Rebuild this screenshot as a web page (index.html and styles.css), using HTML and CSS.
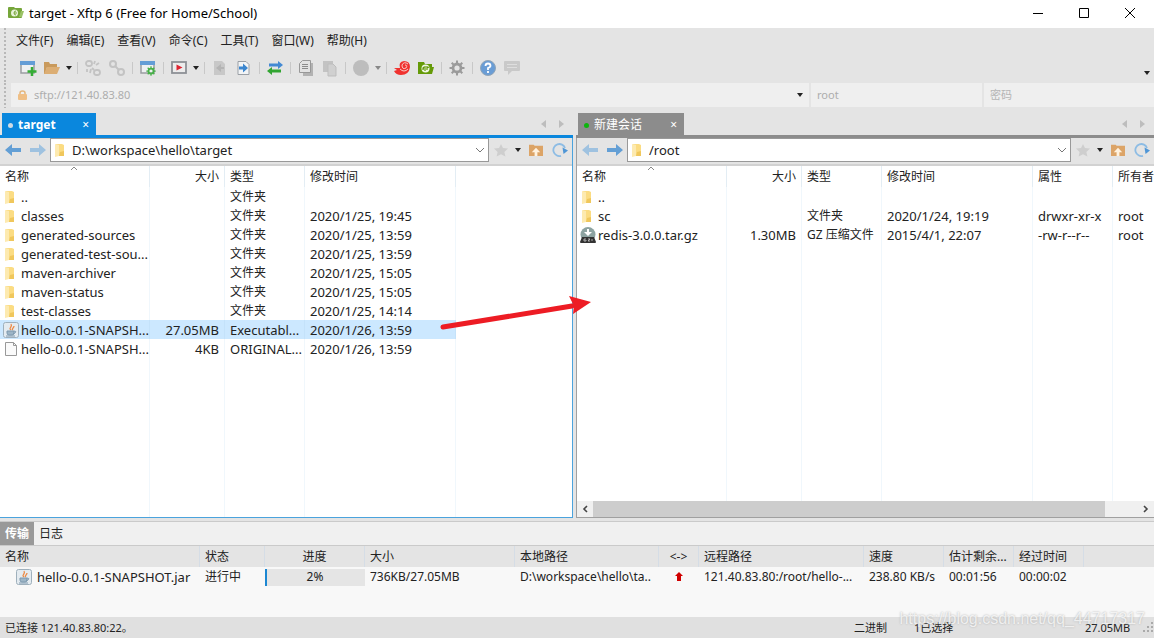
FILE: index.html
```html
<!DOCTYPE html>
<html lang="zh-CN">
<head>
<meta charset="utf-8">
<title>target - Xftp 6</title>
<link rel="stylesheet" href="styles.css">
</head>
<body>
<svg class="defs" aria-hidden="true">
  <symbol id="folder" viewBox="0 0 10 14"><path d="M1 1h6l2 1v11H1z" fill="#fbdc83"/><path d="M0 1l4 1v11l-4 1z" fill="#fdeab0"/><path d="M5 9l4-1v5H4z" fill="#f0c75c"/></symbol>
  <symbol id="jar" viewBox="0 0 16 16"><rect x=".5" y=".5" width="15" height="15" rx="2" fill="#e4ebf0" stroke="#9fb0bc"/><path d="M8 8c-3-2 2-3 0-6M10 8c-2-1 1-2 1-4" fill="none" stroke="#ec8a45" stroke-width="1.3"/><path d="M4 9h7v2q0 2-2 2H6q-2 0-2-2zM3 14h9" fill="#9db5c6" stroke="#7c98ae"/><path d="M11 9q3 0 1 2l-2 1" fill="none" stroke="#7c98ae"/></symbol>
  <symbol id="page" viewBox="0 0 16 16"><path d="M2.500 1.500h8l3 3v10h-11z" fill="#fafafa" stroke="#999"/><path d="M10.500 1.500v3h3" fill="none" stroke="#999"/></symbol>
  <symbol id="gz" viewBox="0 0 16 16"><circle cx="8" cy="7.500" r="7.500" fill="#8da3a1"/><path d="M7 2h2v3h3L8 9 4 5h3z" fill="#fff"/><path d="M2 10h12l2 5q0 1-1 1H1q-1 0-1-1z" fill="#333"/><path d="M6 12H4v2h2v-1M8 12h2l-2 2h2M12 12v2" fill="none" stroke="#ccc" stroke-width=".8"/></symbol>
  <symbol id="left" viewBox="0 0 16 14"><path d="M0 7l7-6v4h9v4H7v4z" fill="currentColor"/></symbol>
  <symbol id="right" viewBox="0 0 16 14"><path d="M16 7L9 1v4H0v4h9v4z" fill="currentColor"/></symbol>
  <symbol id="caret" viewBox="0 0 6 4"><path d="M0 0h6L3 4z" fill="currentColor"/></symbol>
  <symbol id="chev" viewBox="0 0 10 6"><path d="M1 1l4 4 4-4" fill="none" stroke="#777"/></symbol>
  <symbol id="star" viewBox="0 0 14 14"><path d="M7 1l2 4 5 .6-3.600 3.400 1 4.600L7 11.300 2.600 13.600l1-4.600L0 5.600 5 5z" fill="#cecece"/></symbol>
  <symbol id="up" viewBox="0 0 15 13"><path d="M0 1h5l1 1h9v11H0z" fill="#dca467"/><path d="M7.500 4l4.500 5H9v4H6V9H3z" fill="#fff2df"/></symbol>
  <symbol id="reload" viewBox="0 0 16 14"><path d="M9 12.800A6 6 0 1 1 13 5" fill="none" stroke="#8dbce4" stroke-width="1.800"/><path d="M10.500 4.500l5.500 3-4.500 3.500z" fill="#4f96d6"/></symbol>
  <symbol id="window" viewBox="0 0 16 16"><path d="M1 2h13v11H1z" fill="#eef0f2" stroke="#9a9da1" stroke-width="1.500"/><path d="M0 1h15v4H0z" fill="#649dd6"/></symbol>
  <symbol id="gear" viewBox="0 0 16 16"><circle cx="8" cy="8" r="4" fill="none" stroke="currentColor" stroke-width="2.800"/><path d="M8 .5v3M8 12.500v3M.5 8h3M12.500 8h3M2.700 2.700l2 2M11.300 11.300l2 2M2.700 13.300l2-2M11.300 4.700l2-2" stroke="currentColor" stroke-width="2"/></symbol>
  <symbol id="tri-l" viewBox="0 0 5 8"><path d="M5 0v8L0 4z" fill="#bdbdbd"/></symbol>
  <symbol id="tri-r" viewBox="0 0 5 8"><path d="M0 0v8l5-4z" fill="#bdbdbd"/></symbol>
  <symbol id="doc" viewBox="0 0 16 16"><path d="M2 1h8l3 3v11H2z" fill="currentColor"/></symbol>
</svg>

<header class="titlebar">
  <svg class="i16" viewBox="0 0 16 16"><path d="M0 3q0-1 1-1h5l1 1h6q1 0 1 1v8q0 1-1 1H1q-1 0-1-1z" fill="#76a63a"/><path d="M13 6h3l-2 6h-3z" fill="#9bc267"/><circle cx="6.500" cy="8" r="3.500" fill="#e8f2da"/><path d="M8 6a2 2 0 1 0 0 4M6 8h3" stroke="#76a63a" fill="none"/></svg>
  <span class="title">target - Xftp 6 (Free for Home/School)</span>
  <button class="win" aria-label="最小化"><svg class="i12" viewBox="0 0 12 12"><path d="M1 6.500h10" stroke="#000"/></svg></button>
  <button class="win" aria-label="最大化"><svg class="i12" viewBox="0 0 12 12"><path d="M1.500 1.500h9v9h-9z" fill="none" stroke="#000"/></svg></button>
  <button class="win" aria-label="关闭"><svg class="i12" viewBox="0 0 12 12"><path d="M1 1l10 10M11 1L1 11" stroke="#000"/></svg></button>
</header>

<div class="bars">
  <div class="grip">
    <nav class="menu"><button>文件(F)</button><button>编辑(E)</button><button>查看(V)</button><button>命令(C)</button><button>工具(T)</button><button>窗口(W)</button><button>帮助(H)</button></nav>
    <div class="tools">
      <button class="tool" aria-label="新建"><svg class="i16"><use href="#window"/><path d="M12 7v9M7.500 11.500h9" stroke="#35ad35" stroke-width="2.500"/></svg></button>
      <button class="tool" aria-label="打开"><svg class="i16" viewBox="0 0 16 16"><path d="M0 2h5l1 2h7v3H3l-2 7H0z" fill="#c99a5c"/><path d="M3 7h13l-3 7H0z" fill="#dcae74"/></svg></button>
      <button class="drop" aria-label="更多"><svg class="caret"><use href="#caret"/></svg></button><i class="sep"></i>
      <button class="tool" aria-label="断开"><svg class="i16" viewBox="0 0 16 16" fill="none" stroke="#c3c3c3" stroke-width="1.800"><rect x="1" y="1" width="6" height="5" rx="2.500"/><rect x="9" y="10" width="6" height="5" rx="2.500"/><path d="M10 1l-1 3M14 3l-3 2M2 9v3M6 9l-1 4M7 8l2 2"/></svg></button>
      <button class="tool" aria-label="重新连接"><svg class="i16" viewBox="0 0 16 16" fill="none" stroke="#c3c3c3" stroke-width="2"><rect x="1" y="1" width="6" height="6" rx="3"/><rect x="9" y="9" width="6" height="6" rx="3"/><path d="M6 6l4 4"/></svg></button><i class="sep"></i>
      <button class="tool" aria-label="属性"><svg class="i16"><use href="#window"/><use class="green" href="#gear" x="6" y="6" width="10" height="10"/></svg></button><i class="sep"></i>
      <button class="tool" aria-label="执行"><svg class="i16" viewBox="0 0 16 16"><rect x="1" y="2" width="14" height="11" fill="#ececec" stroke="#8d9196" stroke-width="1.800"/><path d="M5.500 4.500l6 3-6 3z" fill="#dd2430"/></svg></button>
      <button class="drop" aria-label="更多"><svg class="caret"><use href="#caret"/></svg></button><i class="sep"></i>
      <button class="tool pale" aria-label="下载"><svg class="i16"><use href="#doc"/><path d="M4 8l5-4v3h3v2H9v3z" fill="#b4b4b4"/></svg></button>
      <button class="tool" aria-label="上传"><svg class="i16" viewBox="0 0 16 16"><path d="M2 1.500h8l3 3v10H2z" fill="#f2f4f6" stroke="#9a9fa5"/><path d="M3 6.500h4v-3l5 4.500-5 4.500v-3H3z" fill="#3b86cf"/></svg></button><i class="sep"></i>
      <button class="tool" aria-label="同步"><svg class="i16" viewBox="0 0 16 16"><path d="M2 3.500h9V1l5 4-5 4V6.500H2z" fill="#4389d3"/><path d="M14 9.500H5V7l-5 4 5 4v-2.500h9z" fill="#32a532"/></svg></button><i class="sep"></i>
      <button class="tool" aria-label="复制"><svg class="i16" viewBox="0 0 16 16"><path d="M5 3h10v13H5z" fill="#b2b2b2"/><path d="M4.500.5h8v12h-11v-9z" fill="#e2e2e2" stroke="#989898"/><path d="M4 4.500h6M4 6.500h6M4 8.500h6" stroke="#8b8b8b"/></svg></button>
      <button class="tool pale" aria-label="粘贴"><svg class="i16" viewBox="0 0 16 16"><path d="M1 1h10v11H1z" fill="#c3c3c3"/><path d="M6 4h5l3 3v9H6z" fill="#d0d0d0" stroke="#bdbdbd"/></svg></button><i class="sep"></i>
      <button class="tool" aria-label="视图"><svg class="i16" viewBox="0 0 16 16"><circle cx="8" cy="8" r="8" fill="#bdbdbd"/></svg></button>
      <button class="drop dim" aria-label="更多"><svg class="caret"><use href="#caret"/></svg></button><i class="sep"></i>
      <button class="tool" aria-label="Xshell"><svg class="i16" viewBox="0 0 16 16"><path d="M0 8h6Q4 2 10 1q6 0 6 6-1 8-9 8-5 0-7-4l3-1z" fill="#f0322f"/><path d="M14 4Q10 1 8 5q0 5 4 3 2-3-1-3M6 9q4 4 8 0" fill="none" stroke="#f8c9c5"/></svg></button>
      <button class="tool" aria-label="Xftp"><svg class="i16" viewBox="0 0 16 16"><path d="M0 2h6l1 2h7v3h2l-2 7H0z" fill="#659a08"/><circle cx="7.500" cy="8.500" r="4" fill="#f0f6e4"/><path d="M7 6v5M6 7L5 8v2M9 6v4M9 8l2-1" stroke="#659a08" stroke-width="1.200"/></svg></button><i class="sep"></i>
      <button class="tool grey" aria-label="选项"><svg class="i16"><use href="#gear"/></svg></button><i class="sep"></i>
      <button class="tool" aria-label="帮助"><svg class="i16" viewBox="0 0 16 16"><circle cx="8" cy="8" r="7.500" fill="#6a9dd5" stroke="#91a5b8"/><path d="M5.500 6q0-2.500 2.500-2.500T10.500 6Q10 7.500 8 8v2M8 11v2" fill="none" stroke="#fff" stroke-width="1.800"/></svg></button>
      <button class="tool" aria-label="反馈"><svg class="i16" viewBox="0 0 16 16"><path d="M1 1h14q1 0 1 1v8q0 1-1 1H8l-4 4v-4H1q-1 0-1-1V2q0-1 1-1z" fill="#c9c9c9"/><path d="M3 4.500h10M3 7.500h10" stroke="#dedede"/></svg></button>
      <button class="drop last" aria-label="工具栏选项"><svg class="caret"><use href="#caret"/></svg></button>
    </div>
  </div>
  <div class="grip address">
    <div class="field host">
      <svg class="lock" viewBox="0 0 9 10"><path d="M2 5V3q0-2 2.500-2T7 3v2" fill="none" stroke="#e5b67d" stroke-width="1.500"/><rect y="4" width="9" height="6" rx="1" fill="#efbf86"/></svg>
      <input aria-label="地址" value="sftp://121.40.83.80"><button class="drop" aria-label="地址历史"><svg class="caret"><use href="#caret"/></svg></button>
    </div>
    <div class="field user"><input aria-label="用户名" value="root"></div>
    <div class="field pass"><input aria-label="密码" placeholder="密码"></div>
  </div>
</div>

<main class="panes">
  <section class="pane local">
    <div class="tabs"><button class="tab"><i class="dot"></i><b>target</b><span class="x">×</span></button>
      <button class="tri push" aria-label="上一个"><svg><use href="#tri-l"/></svg></button><button class="tri" aria-label="下一个"><svg><use href="#tri-r"/></svg></button></div>
    <div class="frame">
      <div class="nav">
        <button class="tool arrow" aria-label="后退"><svg><use href="#left"/></svg></button><button class="tool arrow off" aria-label="前进"><svg><use href="#right"/></svg></button>
        <div class="path"><svg class="fold"><use href="#folder"/></svg><select aria-label="本地路径"><option>D:\workspace\hello\target</option></select><svg class="chev"><use href="#chev"/></svg></div>
        <button class="tool" aria-label="收藏"><svg class="i14"><use href="#star"/></svg></button><button class="drop" aria-label="更多"><svg class="caret"><use href="#caret"/></svg></button>
        <button class="tool wide" aria-label="上级目录"><svg class="i14"><use href="#up"/></svg></button><button class="tool" aria-label="刷新"><svg class="i16"><use href="#reload"/></svg></button>
      </div>
      <div class="list">
        <table class="files">
          <colgroup><col class="c150"><col class="c75"><col class="c80"><col class="c151"><col></colgroup>
          <thead><tr><th class="sorted">名称<svg class="sort" viewBox="0 0 8 5"><path d="M1 4l3-3 3 3" fill="none" stroke="#888"/></svg></th><th class="num">大小</th><th>类型</th><th>修改时间</th><th></th></tr></thead>
          <tbody>
            <tr><td><svg class="fold"><use href="#folder"/></svg>..</td><td></td><td class="zh">文件夹</td><td></td><td></td></tr>
            <tr><td><svg class="fold"><use href="#folder"/></svg>classes</td><td></td><td class="zh">文件夹</td><td>2020/1/25, 19:45</td><td></td></tr>
            <tr><td><svg class="fold"><use href="#folder"/></svg>generated-sources</td><td></td><td class="zh">文件夹</td><td>2020/1/25, 13:59</td><td></td></tr>
            <tr><td><svg class="fold"><use href="#folder"/></svg>generated-test-sou...</td><td></td><td class="zh">文件夹</td><td>2020/1/25, 13:59</td><td></td></tr>
            <tr><td><svg class="fold"><use href="#folder"/></svg>maven-archiver</td><td></td><td class="zh">文件夹</td><td>2020/1/25, 15:05</td><td></td></tr>
            <tr><td><svg class="fold"><use href="#folder"/></svg>maven-status</td><td></td><td class="zh">文件夹</td><td>2020/1/25, 15:05</td><td></td></tr>
            <tr><td><svg class="fold"><use href="#folder"/></svg>test-classes</td><td></td><td class="zh">文件夹</td><td>2020/1/25, 14:14</td><td></td></tr>
            <tr class="picked"><td><svg class="ficon"><use href="#jar"/></svg>hello-0.0.1-SNAPSH...</td><td class="num">27.05MB</td><td>Executabl...</td><td>2020/1/26, 13:59</td><td></td></tr>
            <tr><td><svg class="ficon"><use href="#page"/></svg>hello-0.0.1-SNAPSH...</td><td class="num">4KB</td><td>ORIGINAL...</td><td>2020/1/26, 13:59</td><td></td></tr>
            <tr class="rest"><td></td><td></td><td></td><td></td><td></td></tr>
          </tbody>
        </table>
      </div>
    </div>
  </section>

  <section class="pane remote">
    <div class="tabs"><button class="tab"><i class="dot"></i><span>新建会话</span><span class="x">×</span></button>
      <button class="tri push" aria-label="上一个"><svg><use href="#tri-l"/></svg></button><button class="tri" aria-label="下一个"><svg><use href="#tri-r"/></svg></button></div>
    <div class="frame">
      <div class="nav">
        <button class="tool arrow off" aria-label="后退"><svg><use href="#left"/></svg></button><button class="tool arrow" aria-label="前进"><svg><use href="#right"/></svg></button>
        <div class="path"><svg class="fold"><use href="#folder"/></svg><select aria-label="远程路径"><option>/root</option></select><svg class="chev"><use href="#chev"/></svg></div>
        <button class="tool" aria-label="收藏"><svg class="i14"><use href="#star"/></svg></button><button class="drop" aria-label="更多"><svg class="caret"><use href="#caret"/></svg></button>
        <button class="tool wide" aria-label="上级目录"><svg class="i14"><use href="#up"/></svg></button><button class="tool" aria-label="刷新"><svg class="i16"><use href="#reload"/></svg></button>
      </div>
      <div class="list">
        <table class="files">
          <colgroup><col class="c150"><col class="c75"><col class="c80"><col class="c151"><col class="c80"><col></colgroup>
          <thead><tr><th class="sorted">名称<svg class="sort" viewBox="0 0 8 5"><path d="M1 4l3-3 3 3" fill="none" stroke="#888"/></svg></th><th class="num">大小</th><th>类型</th><th>修改时间</th><th>属性</th><th>所有者</th></tr></thead>
          <tbody>
            <tr><td><svg class="fold"><use href="#folder"/></svg>..</td><td></td><td></td><td></td><td></td><td></td></tr>
            <tr><td><svg class="fold"><use href="#folder"/></svg>sc</td><td></td><td class="zh">文件夹</td><td>2020/1/24, 19:19</td><td>drwxr-xr-x</td><td>root</td></tr>
            <tr><td><svg class="ficon"><use href="#gz"/></svg>redis-3.0.0.tar.gz</td><td class="num">1.30MB</td><td class="zh">GZ 压缩文件</td><td>2015/4/1, 22:07</td><td>-rw-r--r--</td><td>root</td></tr>
            <tr class="rest"><td></td><td></td><td></td><td></td><td></td><td></td></tr>
          </tbody>
        </table>
      </div>
      <div class="scroll"><button aria-label="向左滚动"><svg viewBox="0 0 6 8"><path d="M5 1L2 4l3 3" fill="none" stroke="#444" stroke-width="1.600"/></svg></button><div class="track"><div class="thumb"></div></div><button aria-label="向右滚动"><svg viewBox="0 0 6 8"><path d="M1 1l3 3-3 3" fill="none" stroke="#444" stroke-width="1.600"/></svg></button></div>
    </div>
  </section>
  <svg class="pointer" viewBox="0 0 150 36"><path d="M3 31L132 10" stroke="#ed1c24" stroke-width="5" stroke-linecap="round"/><path d="M129 0l22 6-18 12 1-8z" fill="#ed1c24"/></svg>
</main>

<section class="bottom">
  <div class="btabs"><button class="on">传输</button><button>日志</button></div>
  <table class="jobs">
    <colgroup><col class="c200"><col class="c65"><col class="c100"><col class="c150"><col class="c144"><col class="c40"><col class="c165"><col class="c80"><col class="c70"><col class="c70"><col></colgroup>
    <thead><tr><th>名称</th><th>状态</th><th class="mid">进度</th><th>大小</th><th>本地路径</th><th class="mid">&lt;-&gt;</th><th>远程路径</th><th>速度</th><th>估计剩余...</th><th>经过时间</th><th></th></tr></thead>
    <tbody><tr><td class="job"><svg class="ficon"><use href="#jar"/></svg>hello-0.0.1-SNAPSHOT.jar</td><td>进行中</td><td class="bar"><div class="meter">2%</div></td><td>736KB/27.05MB</td><td>D:\workspace\hello\ta..</td><td class="mid"><svg class="sent" viewBox="0 0 8 9"><path d="M4 0l4 4H6v5H2V4H0z" fill="#d00000"/></svg></td><td>121.40.83.80:/root/hello-...</td><td>238.80 KB/s</td><td>00:01:56</td><td>00:00:02</td><td></td></tr></tbody>
  </table>
</section>

<footer class="status">
  <span class="conn">已连接 121.40.83.80:22。</span><span class="mode">二进制</span><span class="sel">1已选择</span><span class="size">27.05MB</span>
  <svg class="i12" viewBox="0 0 12 12" fill="#aaa"><path d="M9 0h2v2H9zM9 4h2v2H9zM9 8h2v2H9zM5 4h2v2H5zM5 8h2v2H5zM1 8h2v2H1z"/></svg>
  <span class="mark">https://blog.csdn.net/qq_44717317</span>
</footer>
</body>
</html>
```
FILE: styles.css
```css
* { box-sizing: border-box; }
body {
  margin: 0;
  min-height: 100vh;
  display: flex;
  flex-direction: column;
  background: #e4e4e4;
  color: #222;
  font: 12px/16px "Noto Sans", "Noto Sans CJK SC", sans-serif;
  overflow: hidden;
}
button, input, select { font: inherit; color: inherit; border: 0; padding: 0; margin: 0; background: none; outline: 0; }
button { display: flex; align-items: center; justify-content: center; }
svg { flex: none; display: block; overflow: visible; }
.defs { position: absolute; width: 0; height: 0; }
.i16 { width: 16px; height: 16px; }
.i14 { width: 14px; height: 14px; }
.i12 { width: 12px; height: 12px; }
.caret { width: 6px; height: 4px; }

.titlebar { display: flex; align-items: center; height: 28px; padding: 0 1px 2px 8px; background: #fff; color: #000; }
.title { flex: 1; padding-left: 5px; font-size: 13px; }
.win { width: 46px; height: 26px; }

.grip { padding-left: 16px; background: repeating-linear-gradient(#b8b8b8 0 2px, #e4e4e4 2px 4px) 4px 0 / 2px 100% no-repeat; }
.menu { display: flex; gap: 13px; height: 26px; align-items: center; }
.tools { display: flex; height: 28px; align-items: center; padding-bottom: 1px; }
.tool { width: 24px; height: 24px; }
.tool.wide { width: 25px; }
.drop { width: 10px; height: 16px; color: #222; }
.drop.dim { color: #888; }
.drop.last { margin: 0 2px 0 auto; align-self: flex-end; }
.sep { width: 7px; height: 12px; background: linear-gradient(#c8c8c8, #c8c8c8) 3px 0 / 1px 100% no-repeat; }
.pale { color: #c8c8c8; }
.grey { color: #9b9b9b; }
.green { color: #48b048; }

.address { display: flex; gap: 2px; height: 25px; margin-top: 1px; padding-left: 11px; padding-bottom: 1px; }
.field { display: flex; align-items: center; background: #efefef; color: #adadad; min-width: 0; }
.field input { flex: 1; min-width: 0; width: 100%; padding-left: 6px; font-size: 11px; }
.field input::placeholder { color: #b5b5b5; opacity: 1; }
.host { flex: 798; }
.user { flex: 171; }
.pass { flex: 170; }
.lock { width: 9px; height: 10px; margin: 0 1px 0 7px; }
.host .drop { margin-right: 4px; }

.panes { position: relative; flex: 1; display: flex; gap: 3px; padding-top: 5px; min-height: 0; }
.pane { display: flex; flex-direction: column; min-width: 0; }
.local { flex: 573; --line: #0a87dd; --edge: #4ba3dd; }
.remote { flex: 578; --line: #8c8c8c; --edge: #a0a0a0; }
.tabs { display: flex; height: 25px; align-items: flex-end; border-bottom: 3px solid var(--line); }
.tab { height: 22px; background: var(--line); color: #fff; padding: 2px 7px 0 6px; gap: 5px; margin-left: 2px; }
.local .tab { width: 94px; }
.remote .tab { width: 106px; }
.dot { width: 5px; height: 5px; border-radius: 50%; background: #cfdce5; }
.remote .dot { background: #0db50d; }
.x { margin-left: auto; }
.tri { width: 18px; height: 22px; }
.tri svg { width: 5px; height: 8px; }
.push { margin-left: auto; }
.tri:last-child { margin-right: 3px; }
.frame { flex: 1; display: flex; flex-direction: column; min-height: 0; border: solid var(--edge); border-width: 0 1px 1px 0; }
.remote .frame { border-width: 0 0 1px 1px; }
.nav { display: flex; align-items: flex-start; height: 28px; border-bottom: 2px solid #d2d2d2; }
.nav .drop { height: 24px; }
.arrow { color: #639fd5; width: 25px; }
.arrow svg { width: 16px; height: 14px; }
.arrow.off { color: #9fc2e0; }
.path { flex: 1; display: flex; align-items: center; height: 24px; min-width: 0; padding: 0 3px 0 4px; border: 1px solid #999; background: #fff; }
.path select { flex: 1; min-width: 0; appearance: none; padding-left: 3px; font-size: 13px; }
.chev { width: 10px; height: 6px; }

.list { flex: 1; display: flex; min-height: 0; background: #fff; overflow: hidden; }
table { width: 100%; table-layout: fixed; border-collapse: separate; border-spacing: 0; }
th, td { padding: 0 5px; text-align: left; font-weight: 400; white-space: nowrap; overflow: hidden; }
.files td { height: 19px; line-height: 18px; font-size: 13px; border-right: 1px solid #f0f7fc; }
.files th { height: 21px; border-right: 1px solid #e3edf4; overflow: visible; }
.files tr > :last-child { border-right: 0; }
.files .rest td { height: auto; }
.files td:first-child { padding-right: 0; }
.files .zh { font-size: 12px; line-height: 16px; padding-top: 1px; }
.num { text-align: right; }
.files .picked td:not(:last-child) { background: #cce8ff; border-color: #c4e2fa; }
.sorted { position: relative; }
.sort { position: absolute; left: 47%; top: 0; width: 8px; height: 5px; }
.fold { width: 10px; height: 14px; }
.path .fold { margin-right: 4px; }
td .fold, .ficon { display: inline-block; vertical-align: middle; }
td .fold { margin: -3px 6px 0 0; }
.ficon { width: 16px; height: 16px; margin: -3px 2px 0 -2px; }
.c40 { width: 40px; } .c65 { width: 65px; } .c70 { width: 70px; } .c75 { width: 75px; } .c80 { width: 80px; }
.c100 { width: 100px; } .c144 { width: 144px; } .c150 { width: 150px; } .c151 { width: 151px; } .c165 { width: 165px; } .c200 { width: 200px; }

.scroll { display: flex; height: 16px; background: #f0f0f0; }
.scroll button { width: 16px; }
.scroll button svg { width: 6px; height: 8px; }
.track { flex: 1; display: flex; }
.thumb { width: 94%; background: #cdcdcd; }
.pointer { position: absolute; left: 440px; top: 188px; width: 150px; height: 36px; }

.bottom { height: 96px; margin-top: 3px; background: #f8f8f8; }
.btabs { display: flex; height: 25px; background: #f0f0f0; border: solid #cacaca; border-width: 1px 0; }
.btabs button { width: 34px; }
.btabs .on { background: #999; color: #fff; font-weight: 700; }
.jobs th { height: 21px; background: #e4e4e4; border-right: 1px solid #d5dde6; }
.jobs th:last-child { border-right: 0; }
.jobs td { height: 20px; }
.jobs .job { padding: 0 0 0 18px; font-size: 13px; }
.jobs .job .ficon { margin-right: 5px; }
.jobs .mid { text-align: center; }
.jobs .bar { padding: 0; }
.meter { height: 17px; background: linear-gradient(90deg, #1c87d2 2%, #e5e5e5 2%); text-align: center; }
.sent { display: inline-block; width: 8px; height: 9px; }

.status { position: relative; display: flex; align-items: center; height: 21px; padding: 1px 0 0 5px; background: #e0e0e0; font-size: 11px; }
.conn { flex: 1; }
.mode { width: 60px; }
.sel { width: 171px; }
.size { width: 57px; }
.mark { position: absolute; right: 9px; bottom: 10px; font: 16px/18px "Liberation Sans", sans-serif; color: rgba(255, 255, 255, .75); text-shadow: 0 0 2px #aaa; }
```
